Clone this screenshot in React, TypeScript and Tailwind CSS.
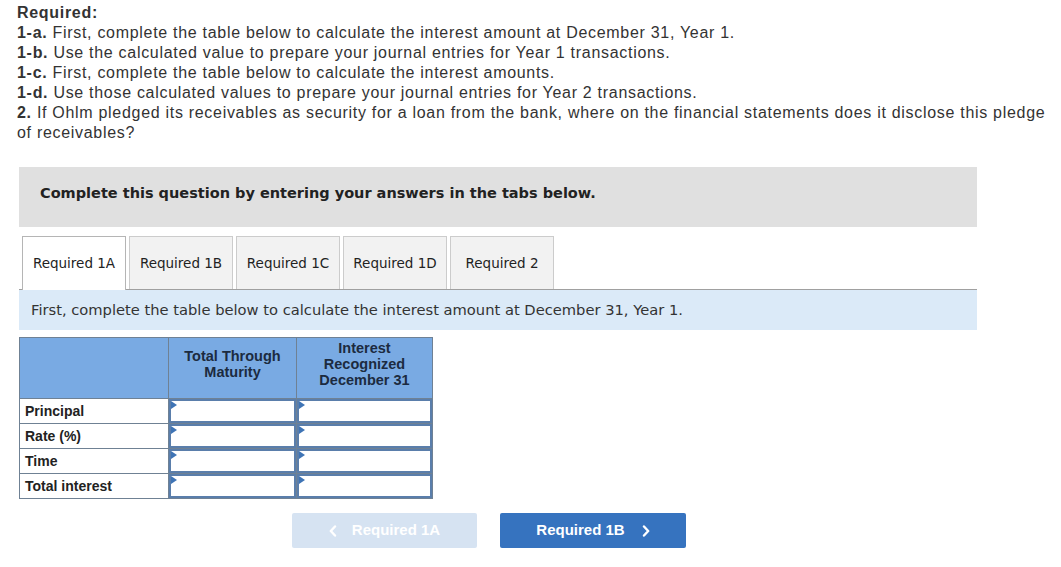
import React from "react";

const Triangle = () => (
  <span className="absolute left-0 top-0 w-0 h-0 border-t-[4px] border-b-[4px] border-l-[6px] border-t-transparent border-b-transparent border-l-[#3f74b5]" />
);

const InputCell = () => (
  <td className="border border-[#6f8194] p-0">
    <div className="relative h-[24px] border-2 border-[#5a7eab] bg-white">
      <Triangle />
    </div>
  </td>
);

const Chev = ({ dir }: { dir: "l" | "r" }) => (
  <svg width="8" height="12" viewBox="0 0 8 12" fill="none" stroke="currentColor" strokeWidth="2.4" strokeLinecap="round" strokeLinejoin="round">
    {dir === "r" ? <path d="M2 1.5 L6.2 6 L2 10.5" /> : <path d="M6 1.5 L1.8 6 L6 10.5" />}
  </svg>
);

export default function App() {
  const tabs = ["Required 1A", "Required 1B", "Required 1C", "Required 1D", "Required 2"];
  const rows = ["Principal", "Rate (%)", "Time", "Total interest"];
  return (
    <div className="w-[1061px] h-[567px] bg-white overflow-hidden pt-[3px]">
      <div className="pl-[17px] text-[16px] leading-[20px] tracking-[0.7px] text-[#333333] font-['Liberation_Sans',Arial,sans-serif] whitespace-nowrap">
        <div className="font-bold">Required:</div>
        <div><b>1-a.</b> First, complete the table below to calculate the interest amount at December 31, Year 1.</div>
        <div><b>1-b.</b> Use the calculated value to prepare your journal entries for Year 1 transactions.</div>
        <div><b>1-c.</b> First, complete the table below to calculate the interest amounts.</div>
        <div><b>1-d.</b> Use those calculated values to prepare your journal entries for Year 2 transactions.</div>
        <div><b>2.</b> If Ohlm pledged its receivables as security for a loan from the bank, where on the financial statements does it disclose this pledge</div>
        <div>of receivables?</div>
      </div>

      <div className="ml-[19px] w-[958px] mt-[24px]">
        <div className="h-[60px] bg-[#e0e0e0] pl-[21px] pt-[18px] font-['DejaVu_Sans',Verdana,sans-serif] font-bold text-[14.5px] leading-[17px] text-[#222222]">
          Complete this question by entering your answers in the tabs below.
        </div>

        <div className="mt-[9px] flex gap-[3px] pl-[3px] font-['DejaVu_Sans',Verdana,sans-serif] text-[13.5px] text-[#222222]">
          {tabs.map((t, i) => (
            <div
              key={t}
              className={
                "w-[104px] flex items-center justify-center border border-b-0 " +
                (i === 0 ? "bg-white border-[#b5b5b5] relative z-10 -mb-px h-[54px]" : "bg-[#f2f2f2] border-[#cccccc] h-[53px]")
              }
            >
              {t}
            </div>
          ))}
        </div>
        <div className="border-t border-[#a0a0a0] bg-[#dbeaf8] h-[41px] pl-[12px] flex items-center font-['DejaVu_Sans',Verdana,sans-serif] text-[14.7px] text-[#333333]">
          First, complete the table below to calculate the interest amount at December 31, Year 1.
        </div>

        <table className="mt-[7px] border-collapse font-['Liberation_Sans',Arial,sans-serif] text-[14px] text-[#222222]">
          <thead>
            <tr className="bg-[#79aae3] h-[61px]">
              <th className="w-[149px] border border-[#6f8194]"></th>
              <th className="w-[128px] border border-[#6f8194] align-middle font-bold leading-[16px] text-[#1c2b40] pb-[8px] text-[14.5px]">
                Total Through
                <br />
                Maturity
              </th>
              <th className="w-[136px] border border-[#6f8194] align-middle font-bold leading-[16px] text-[#1c2b40] pb-[8px] text-[14.5px]">
                Interest
                <br />
                Recognized
                <br />
                December 31
              </th>
            </tr>
          </thead>
          <tbody>
            {rows.map((r) => (
              <tr key={r}>
                <td className="border border-[#6f8194] px-[5px] font-bold leading-[16px]">{r}</td>
                <InputCell />
                <InputCell />
              </tr>
            ))}
          </tbody>
        </table>

        <div className="mt-[14px] ml-[273px] flex gap-[23px] font-['Liberation_Sans',Arial,sans-serif] font-bold text-[15px]">
          <div className="w-[185px] h-[35px] rounded-[2px] bg-[#d6e3f2] text-white flex items-center justify-center gap-[15px]">
            <Chev dir="l" />
            <span>Required 1A</span>
          </div>
          <div className="w-[186px] h-[35px] rounded-[2px] bg-[#3673bf] text-white flex items-center justify-center gap-[17px]">
            <span>Required 1B</span>
            <Chev dir="r" />
          </div>
        </div>
      </div>
    </div>
  );
}
